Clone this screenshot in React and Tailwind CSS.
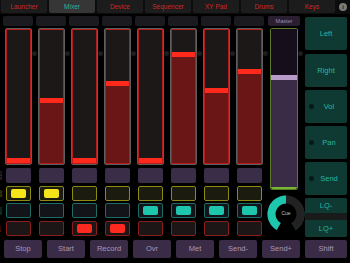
const TABS = ["Launcher", "Mixer", "Device", "Sequencer", "XY Pad", "Drums", "Keys"];

// fill height (px, includes the handle) for each channel fader
const FADERS = [5, 65, 5, 82, 5, 111, 75, 94];
const SOLO = [1, 1, 0, 0, 0, 0, 0, 0];
const MUTE = [0, 0, 0, 0, 1, 1, 1, 1];
const ARM = [0, 0, 1, 1, 0, 0, 0, 0];

function Tabs() {
  return (
    <div className="flex h-[14px] items-start bg-[#0c0c0c] pl-[1px]">
      <div className="flex gap-[2px]">
        {TABS.map((t) => (
          <div
            key={t}
            className={
              t === "Mixer"
                ? "flex h-[13px] w-[46px] items-center justify-center rounded-b-[2px] bg-[#363636] text-[6.5px] text-[#2bb5a3]"
                : "flex h-[13px] w-[46px] items-center justify-center rounded-b-[2px] bg-[#1c1c1c] text-[6.5px] text-[#d42626]"
            }
          >
            {t}
          </div>
        ))}
      </div>
      <div className="ml-[4px] mt-[3px] flex h-[8px] w-[8px] items-center justify-center rounded-full bg-[#7a7a7a] text-[6px] font-bold leading-none text-[#1a1a1a]">
        i
      </div>
    </div>
  );
}

function Dot({ className }) {
  return <div className={`absolute top-[35px] h-[5px] w-[5px] rounded-full bg-[#1c1c1c] ${className}`} />;
}

function Toggle({ on, tone }) {
  const box = {
    solo: "border-[#8c8a12] bg-[#1b1b10]",
    mute: "border-[#1d6b63] bg-[#121419]",
    arm: "border-[#8a1c1c] bg-[#1c1616]",
  }[tone];
  const fill = {
    solo: "bg-[#f5e51a]",
    mute: "bg-[#1ec6ae]",
    arm: "bg-[#ff2a1f]",
  }[tone];
  return (
    <div className={`mx-auto flex h-[15px] w-[25px] items-center justify-center rounded-[2px] border ${box}`}>
      {on ? <div className={`h-[9px] w-[15px] rounded-[2px] ${fill}`} /> : null}
    </div>
  );
}

function Channel({ i }) {
  return (
    <div className="relative flex w-[30px] flex-col">
      {i > 0 && <Dot className="left-[-4px]" />}
      <div className="h-[10px] rounded-[2px] bg-[#1a1a1f]" />
      <div className="mx-auto mt-[2px] h-[137px] w-[27px] rounded-[2px] border border-[#5e5e5e]">
        <div className="flex h-full flex-col justify-end border border-[#b51c1c] bg-[#1d1818]">
          <div className="flex flex-col bg-[#6b1616]" style={{ height: FADERS[i] }}>
            <div className="h-[5px] bg-[#ff2a1c]" />
          </div>
        </div>
      </div>
      <div className="mx-auto mt-[3px] h-[15px] w-[25px] rounded-[2px] bg-[#3a2d47]" />
      <div className="mt-[3px]">
        <Toggle on={SOLO[i]} tone="solo" />
      </div>
      <div className="mt-[2px]">
        <Toggle on={MUTE[i]} tone="mute" />
      </div>
      <div className="mt-[3px]">
        <Toggle on={ARM[i]} tone="arm" />
      </div>
    </div>
  );
}

function RowLabel({ text, color, className }) {
  return (
    <div className={`flex h-[15px] items-center justify-center ${className}`}>
      <span className={`-rotate-90 whitespace-nowrap text-[3.5px] leading-none ${color}`}>{text}</span>
    </div>
  );
}

function Knob() {
  return (
    <div className="relative mx-auto h-[38px] w-[38px]">
      <svg width="38" height="38" viewBox="0 0 38 38">
        <path d="M9.5 34.6 A18 18 0 1 1 28.5 34.6" fill="none" stroke="#1b9c8a" strokeWidth="0.8" />
        <path d="M11.75 31.56 A14.5 14.5 0 1 1 26.25 31.56" fill="none" stroke="#222222" strokeWidth="8" />
        <path d="M11.75 31.56 A14.5 14.5 0 0 1 19 4.5" fill="none" stroke="#1ec6ae" strokeWidth="8" />
      </svg>
      <div className="absolute inset-0 flex items-center justify-center text-[5px] text-[#b8c8c4]">Cue</div>
    </div>
  );
}

function Master() {
  return (
    <div className="relative ml-[3px] flex w-[33px] flex-col">
      <Dot className="left-[-4px]" />
      <Dot className="left-[31px]" />
      <div className="ml-[1px] flex h-[10px] w-[32px] items-center justify-center rounded-[2px] bg-[#2a1f31] text-[5.5px] text-[#9e8cb0]">
        Master
      </div>
      <div className="mx-auto mt-[2px] h-[162px] w-[28px] rounded-[2px] border border-[#5a7a2a]">
        <div className="flex h-full flex-col justify-end rounded-b-[2px] border-b-2 border-[#7ab534] bg-[#170e1b]">
          <div className="flex h-[112px] flex-col bg-[#3a2b46]">
            <div className="h-[5px] bg-[#b89bc9]" />
          </div>
        </div>
      </div>
      <div className="mt-[5px]">
        <Knob />
      </div>
    </div>
  );
}

function TealButton({ label, dot, className = "h-[33px]" }) {
  return (
    <div className={`relative flex items-center justify-center rounded-[2px] bg-[#0f3a33] text-[7.5px] text-[#25b8a2] ${className}`}>
      {dot && <div className="absolute left-[4px] h-[5px] w-[5px] rounded-full bg-[#081a17]" />}
      <span className={dot ? "pl-[6px]" : ""}>{label}</span>
    </div>
  );
}

function PurpleButton({ label, className = "w-[38px]" }) {
  return (
    <div className={`flex h-[18px] items-center justify-center rounded-[2px] bg-[#3a2c47] text-[7.5px] text-[#a896ba] ${className}`}>
      {label}
    </div>
  );
}

export default function App() {
  return (
    <div className="h-[263px] w-[350px] overflow-hidden bg-black font-['Liberation_Sans',Arial,sans-serif]">
      <Tabs />
      <div className="flex pt-[2px]">
        <div className="flex w-[300px] flex-col">
          <div className="flex h-[222px]">
            <div className="flex w-[3px] flex-col pt-[152px]">
              <RowLabel text="Select" color="text-[#5e4d72]" />
              <RowLabel text="Solo" color="text-[#8b8a1c]" className="mt-[3px]" />
              <RowLabel text="Mute" color="text-[#1b7a70]" className="mt-[2px]" />
              <RowLabel text="Arm" color="text-[#8b1f1f]" className="mt-[3px]" />
            </div>
            <div className="flex gap-[3px]">
              {FADERS.map((_, i) => (
                <Channel key={i} i={i} />
              ))}
            </div>
            <Master />
          </div>
          <div className="mt-[2px] flex gap-[5px] pl-[4px]">
            {["Stop", "Start", "Record", "Ovr", "Met", "Send-", "Send+"].map((b) => (
              <PurpleButton key={b} label={b} />
            ))}
          </div>
        </div>
        <div className="ml-[5px] flex w-[42px] flex-col pt-[1px]">
          <TealButton label="Left" />
          <TealButton label="Right" className="mt-[4px] h-[33px]" />
          <TealButton label="Vol" dot className="mt-[3px] h-[33px]" />
          <TealButton label="Pan" dot className="mt-[3px] h-[33px]" />
          <TealButton label="Send" dot className="mt-[3px] h-[33px]" />
          <div className="mt-[3px] flex h-[39px] flex-col justify-between rounded-[2px] bg-[#191b1b]">
            <TealButton label="LQ-" className="h-[15px] rounded-b-none" />
            <TealButton label="LQ+" className="h-[17px] rounded-t-none" />
          </div>
          <PurpleButton label="Shift" className="mt-[3px] w-[42px]" />
        </div>
      </div>
    </div>
  );
}
